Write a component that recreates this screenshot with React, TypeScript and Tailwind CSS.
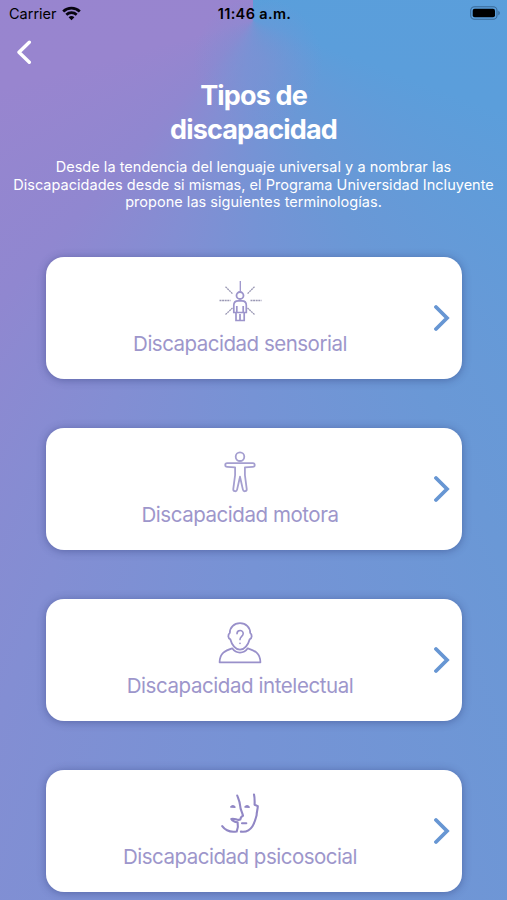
import React from "react";

const SensoryIcon = () => (
  <svg width="44" height="44" viewBox="0 0 44 44" fill="none" stroke="#9c94cb" strokeWidth="1.8">
    <path d="M22.3 1v10" strokeWidth="1.3" />
    <g stroke="#9a98b4" strokeWidth="1.3" strokeDasharray="2 0.6">
      <path d="M7.5 6.700l7 7M36.5 6.700l-7 7M1.500 20.500h11M32.500 20.500h11M7.500 34.500l7-6.500M36.500 34.500l-7-6.500" />
    </g>
    <circle cx="22" cy="15.500" r="3.500" />
    <path d="M15.8 32.500v-7.300c0-2.700 1.800-4.400 4.400-4.400h3.700c2.600 0 4.400 1.700 4.400 4.400v7.300h-12.500zM18.800 26v6M25.200 26v6M18 32.500v8h8.200v-8M22 34v6.500" strokeWidth="1.7" />
  </svg>
);

const MotorIcon = () => (
  <svg width="44" height="44" viewBox="0 0 44 44" fill="none" stroke="#a59fd0" strokeWidth="1.8" strokeLinejoin="round">
    <circle cx="22" cy="5.700" r="4.300" />
    <path d="M9.2 12.200h25.600c2.600 0 2.600 3.600 0 3.600l-7.900.6v7.600l1.800 13.800c.4 2.800-3.200 3.400-3.800.8L22 25.700l-2.900 12.900c-.6 2.600-4.200 2-3.800-.8l1.800-13.800v-7.600l-7.900-.6c-2.600 0-2.600-3.600 0-3.600z" />
  </svg>
);

const IntellectualIcon = () => (
  <svg width="44" height="44" viewBox="0 0 44 44" fill="none" stroke="#9990ca" strokeWidth="1.8" strokeLinejoin="round" strokeLinecap="round">
    <path d="M22 1.200c-6.200 0-10.200 4.300-10.200 9.700-2.200 1.800-1.900 5.600.6 6.500 1.400 5.400 5.200 10.300 9.600 10.300s8.200-4.900 9.600-10.300c2.500-.9 2.800-4.700.6-6.500 0-5.400-4-9.700-10.200-9.700z" />
    <path d="M14.200 26.300C7.500 28.300 1.600 31 1.600 40.300h40.800c0-9.300-5.900-12-12.600-14-4 5.700-11.600 5.700-15.600 0z" />
    <path d="M19 11.800c0-4.400 6.200-4.200 6.200-.4 0 2.900-3.200 3-3.200 6.200M22 21.300v.2" strokeWidth="1.6" />
  </svg>
);

const PsychosocialIcon = () => (
  <svg width="44" height="44" viewBox="0 0 44 44" fill="none" stroke="#9187c5" strokeWidth="2.1" strokeLinejoin="round" strokeLinecap="round">
    <path d="M19.200 2.500c1.300 3.500 2.700 6.400 2.900 10 .2 4 2 6.600 2.900 10.200-1.600.6-2.400 1.800-2.700 3.900-3.300 1.300-5.300-1.800-9-.7 1.200 2.200 3.200 3 6.300 3.300.5 2.500.5 6.200-.9 9.300C12.500 39.500 7 37 4.200 33.200" />
    <path d="M36 1.500c.8 3 .7 7 .6 10.200l3.200 1.400c-.1 3.600-1.200 6-1.200 9.200-1.800 7-4.500 16.800-14 16.500l-1.700-.2M24 30.300h4.300" />
    <path d="M12.800 14c1.200-1.700 3-1.600 4.200.2zM27 14c1.200-1.700 3-1.600 4.200.2z" strokeWidth="1.5" />
  </svg>
);

const categories = [
  { label: "Discapacidad sensorial", icon: <SensoryIcon />, tracking: "tracking-[-0.5px]" },
  { label: "Discapacidad motora", icon: <MotorIcon />, tracking: "tracking-[-0.45px]" },
  { label: "Discapacidad intelectual", icon: <IntellectualIcon />, tracking: "tracking-[-0.42px]" },
  { label: "Discapacidad psicosocial", icon: <PsychosocialIcon />, tracking: "tracking-[-0.5px]" },
];

const StatusBar = () => (
  <div className="grid grid-cols-3 items-center h-7 pl-[9px] pr-[7px] text-black text-[14.5px] leading-7">
    <div className="flex items-center gap-[6px]">
      <span>Carrier</span>
      <svg className="-mt-[2px] -ml-px" width="19" height="15" viewBox="0 0 19 15" fill="none" stroke="#08050f" strokeWidth="2.7">
        <path d="M1.200 5.500c4.700-4.500 11.900-4.500 16.600 0M4.300 8.800c3-2.800 7.400-2.800 10.400 0" />
        <path d="M6.600 11.200c1.700-1.500 4.100-1.500 5.800 0L9.500 14.200z" fill="#08050f" stroke="none" />
      </svg>
    </div>
    <span className="text-center font-semibold tracking-[0.35px] whitespace-nowrap">11:46 a.m.</span>
    <svg className="justify-self-end -mt-[2px]" width="30" height="14" viewBox="0 0 30 14">
      <rect x="0.7" y="0.7" width="26.3" height="12.6" rx="3.8" fill="none" stroke="#3a6a98" strokeWidth="1.1" />
      <rect x="2.7" y="2.7" width="22.3" height="8.6" rx="2" fill="#000" />
      <path d="M28.300 4.700c2 .8 2 3.800 0 4.600z" fill="#3a6a98" />
    </svg>
  </div>
);

const App = () => {
  return (
    <main className="w-full h-[900px] overflow-hidden font-['Inter',sans-serif] bg-[radial-gradient(circle_at_258px_62px,rgba(122,146,212,0.75)_0px,rgba(122,146,212,0.4)_28px,rgba(122,146,212,0)_65px),conic-gradient(from_0deg_at_253px_20px,#589fdb_0deg,#5b9edb_110deg,#6a98d6_155deg,#7693d5_180deg,#838ed3_200deg,#9087d0_222deg,#9885cf_255deg,#9884cf_360deg)]">
      <StatusBar />

      <header className="text-white">
        <button className="block ml-4 mt-3 h-6" aria-label="Volver">
          <svg width="16" height="24" viewBox="0 0 16 24" fill="none" stroke="#fff" strokeWidth="3.4" strokeLinecap="round" strokeLinejoin="round">
            <path d="M13.300 2.200L3 12.200l10.300 10" />
          </svg>
        </button>
        <h1 className="mt-[15px] text-center text-[27px] leading-[34px] font-bold tracking-[-0.85px]">
          Tipos de
          <br />
          discapacidad
        </h1>
        <p className="mt-[11px] text-center text-[14.5px] leading-[17.5px] tracking-[0.03px] whitespace-nowrap">
          Desde la tendencia del lenguaje universal y a nombrar las
          <br />
          Discapacidades desde si mismas, el Programa Universidad Incluyente
          <br />
          propone las siguientes terminologías.
        </p>
      </header>

      {/* Category cards */}
      <section className="mt-[46px] ml-[46px] w-[416px] flex flex-col gap-[49px]">
        {categories.map(({ label, icon, tracking }) => (
          <button
            key={label}
            className="w-full h-[122px] shrink-0 flex items-center bg-white rounded-[18px] shadow-[0_1px_8px_rgba(40,50,110,0.45)]"
          >
            <span className="w-[388px] flex flex-col items-center gap-[6px] pt-[3px]">
              {icon}
              <span className={`text-[20.5px] leading-7 text-[#9d96cb] ${tracking}`}>{label}</span>
            </span>
            <svg className="shrink-0" width="18" height="28" viewBox="0 0 18 28" fill="none" stroke="#6796d3" strokeWidth="3.8" strokeLinecap="round" strokeLinejoin="miter">
              <path d="M2 3l11 11L2 25" />
            </svg>
          </button>
        ))}
      </section>
    </main>
  );
};

export default App;
